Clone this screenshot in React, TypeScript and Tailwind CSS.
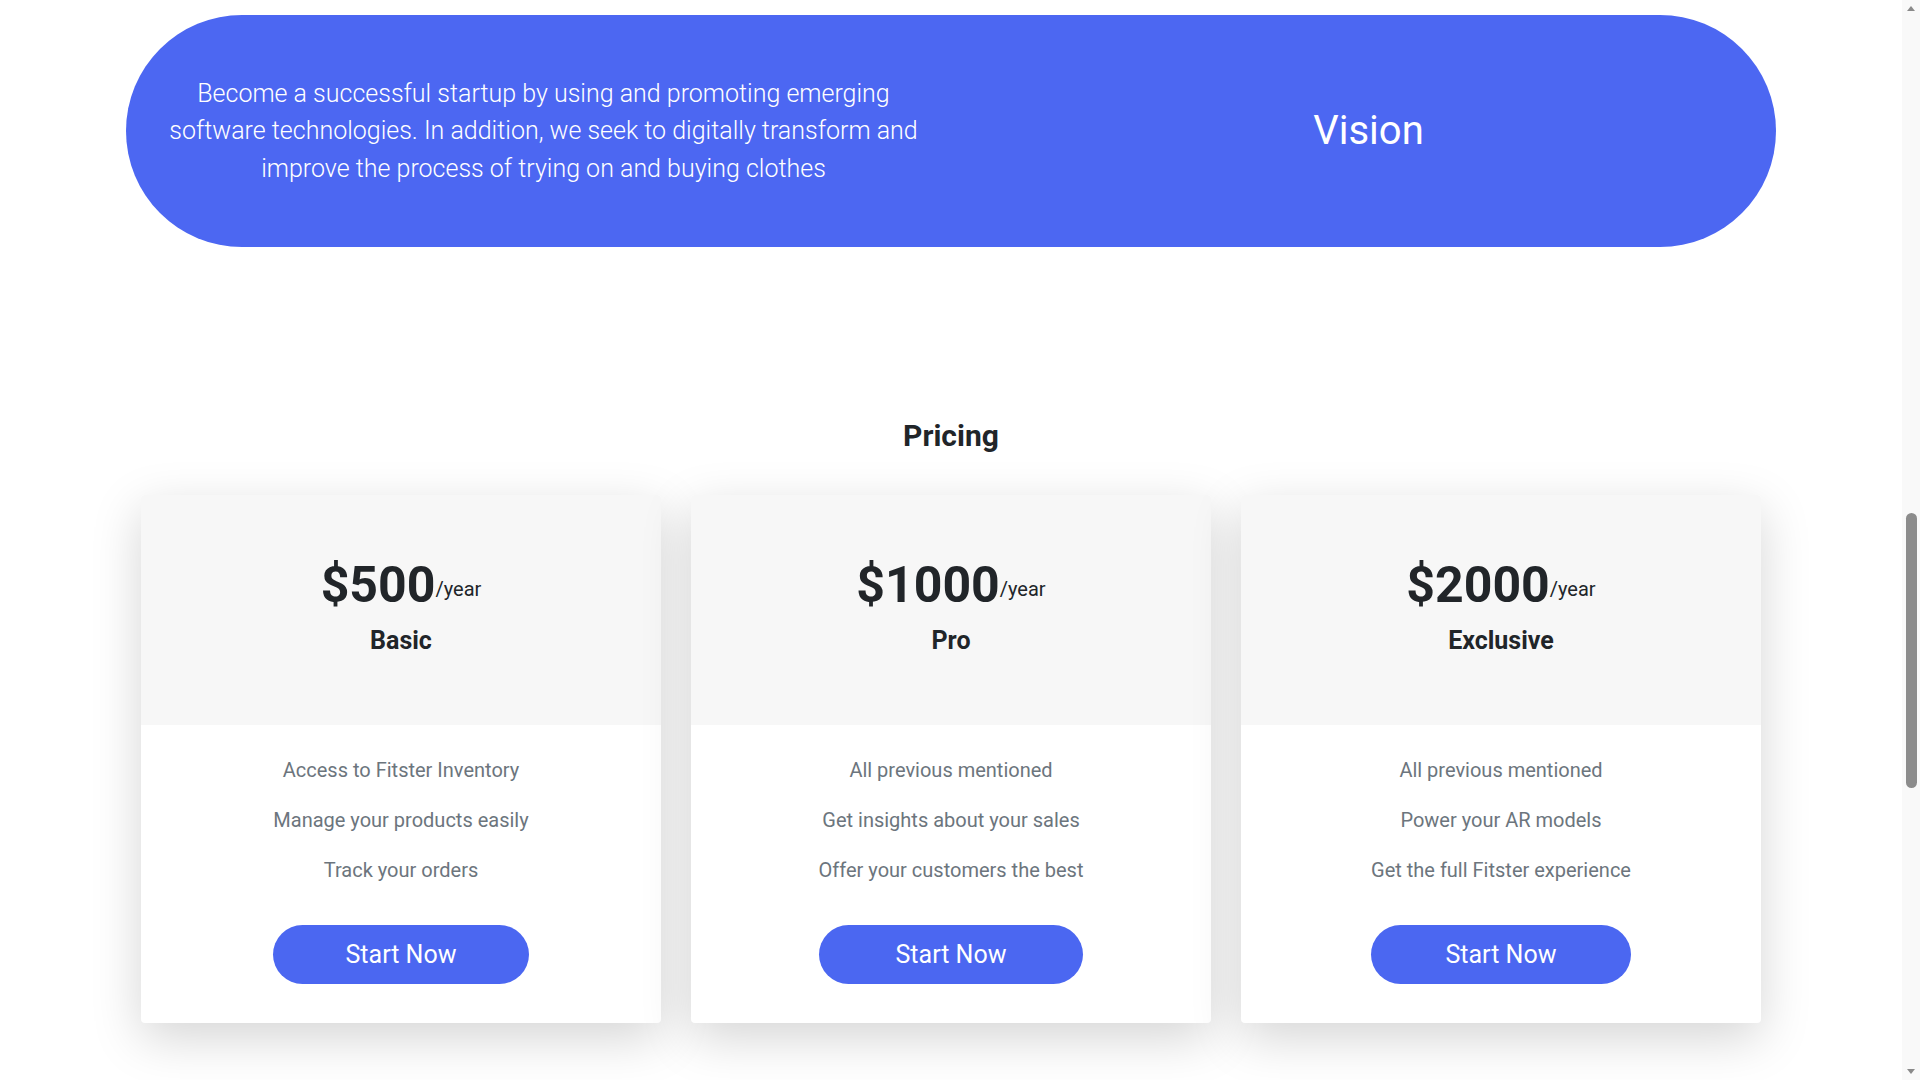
import React from "react";

type Plan = {
  price: string;
  name: string;
  features: string[];
};

const plans: Plan[] = [
  {
    price: "$500",
    name: "Basic",
    features: ["Access to Fitster Inventory", "Manage your products easily", "Track your orders"],
  },
  {
    price: "$1000",
    name: "Pro",
    features: ["All previous mentioned", "Get insights about your sales", "Offer your customers the best"],
  },
  {
    price: "$2000",
    name: "Exclusive",
    features: ["All previous mentioned", "Power your AR models", "Get the full Fitster experience"],
  },
];

function PlanCard({ plan }: { plan: Plan }) {
  return (
    <div className="rounded-[4px] bg-white shadow-[0_15px_50px_rgba(0,0,0,0.17)] overflow-hidden">
      <div className="h-[230px] bg-[#f7f7f7] pt-[60px] flex flex-col items-center text-[#212529]">
        <div className="h-[60px] text-center leading-[60px] whitespace-nowrap">
          <span className="text-[50px] font-bold">{plan.price}</span>
          <span className="text-[20px] align-[6px]">/year</span>
        </div>
        <div className="mt-[12px] text-[25px] font-bold leading-[28.8px]">{plan.name}</div>
      </div>
      <div className="pt-[30px] pb-[39px] flex justify-center">
        <div className="w-fit flex flex-col items-stretch">
          <div className="flex flex-col gap-[20px] text-center text-[20px] leading-[30px] text-[#6c757d]">
            {plan.features.map((f) => (
              <p key={f} className="whitespace-nowrap">{f}</p>
            ))}
          </div>
          <button className="mt-[40px] h-[59px] w-full rounded-full bg-[#4b67f1] text-white text-[25px] leading-[36px] pt-[1px] flex items-center justify-center">
            Start Now
          </button>
        </div>
      </div>
    </div>
  );
}

export default function App() {
  return (
    <div className="flex h-screen w-full overflow-hidden bg-white font-['Roboto','Liberation_Sans',sans-serif]">
      <main className="flex-1 min-w-0 flex flex-col pt-[15px]">
        <section className="mx-auto w-[1650px] h-[232px] shrink-0 rounded-full bg-[#4c67f2] grid grid-cols-2 items-center text-white">
          <p className="pl-[40px] pr-[30px] text-center text-[25px] font-light leading-[37.5px]">
            Become a successful startup by using and promoting emerging software technologies. In addition, we seek to digitally transform and improve the process of trying on and buying clothes
          </p>
          <h2 className="pl-[40px] pr-[30px] text-center text-[40px] font-normal leading-[48px]">Vision</h2>
        </section>

        <h2 className="mt-[171px] text-center text-[30px] font-bold leading-[36px] text-[#212529]">Pricing</h2>

        <div className="mt-[41px] mx-auto w-[1620px] grid grid-cols-3 gap-[30px]">
          {plans.map((p) => (
            <PlanCard key={p.name} plan={p} />
          ))}
        </div>
      </main>

      <div className="w-[18px] h-full shrink-0 bg-[#f9f9f9] flex flex-col items-center">
        <div className="h-[17px] w-full flex items-center justify-center">
          <svg width="8" height="5" viewBox="0 0 8 5">
            <polygon points="4,0 8,5 0,5" fill="#8a8a8a" />
          </svg>
        </div>
        <div className="mt-[496px] w-[11px] h-[275px] rounded-full bg-[#8c8c8c]" />
        <div className="mt-auto h-[17px] w-full flex items-center justify-center">
          <svg width="8" height="5" viewBox="0 0 8 5">
            <polygon points="0,0 8,0 4,5" fill="#8a8a8a" />
          </svg>
        </div>
      </div>
    </div>
  );
}
